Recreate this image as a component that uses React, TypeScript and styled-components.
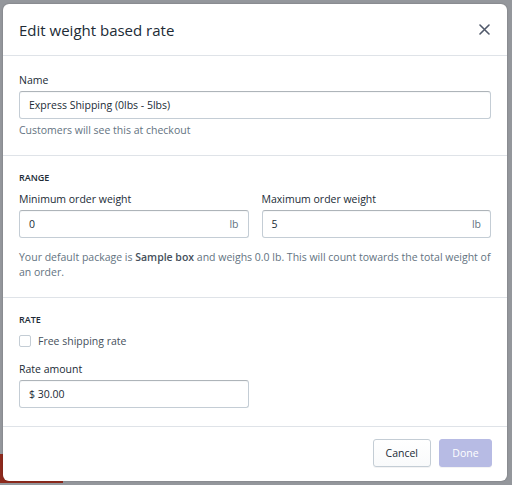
import React from "react";
import styled, {createGlobalStyle} from "styled-components";

const GlobalStyle = createGlobalStyle`
    html, body {
        margin: 0;
        padding: 0;
        background: #94979c;
    }

    * {
        box-sizing: border-box;
    }
`

function CloseIcon() {
    return <svg width="11" height="11" viewBox="0 0 11 11">
        <path d="M1 1 L10 10 M10 1 L1 10" stroke="#50596a" strokeWidth="1.6" strokeLinecap="round"/>
    </svg>
}

interface FieldProps {
    label: string
    value: string
    suffix?: string
}

function TextField({label, value, suffix}: FieldProps) {
    return <Field>
        <Label>{label}</Label>
        <InputBox>
            <span>{value}</span>
            {suffix && <Suffix>{suffix}</Suffix>}
        </InputBox>
    </Field>
}

function App() {
    return <Backdrop>
        <GlobalStyle/>
        <PageBehind/>
        <Modal>
            <Header>
                <Title>Edit weight based rate</Title>
                <CloseButton aria-label="Close"><CloseIcon/></CloseButton>
            </Header>

            <Section $top={17}>
                <TextField label="Name" value="Express Shipping (0lbs - 5lbs)"/>
                <HelpText>Customers will see this at checkout</HelpText>
            </Section>

            <Section>
                <Subheading>Range</Subheading>
                <Row>
                    <TextField label="Minimum order weight" value="0" suffix="lb"/>
                    <TextField label="Maximum order weight" value="5" suffix="lb"/>
                </Row>
                <Note>
                    Your default package is <strong>Sample box</strong> and weighs 0.0 lb. This will count
                    towards the total weight of an order.
                </Note>
            </Section>

            <Section $bottom={18}>
                <Subheading>Rate</Subheading>
                <CheckRow>
                    <CheckBox/>
                    Free shipping rate
                </CheckRow>
                <HalfRow>
                    <TextField label="Rate amount" value="$ 30.00"/>
                </HalfRow>
            </Section>

            <Footer>
                <Button>Cancel</Button>
                <Button $primary>Done</Button>
            </Footer>
        </Modal>
    </Backdrop>
}

const Backdrop = styled.div`
    position: relative;
    width: 512px;
    height: 485px;
    padding: 4px 5px 4px 3px;
    background: #94979c;
    font-family: "Open Sans", "Noto Sans", sans-serif;
    color: #212b36;
    overflow: hidden;
`

const PageBehind = styled.div`
    position: absolute;
    left: 0;
    bottom: 2px;
    width: 63px;
    height: 29px;
    background: #8e2a1d;
`

const Modal = styled.div`
    position: relative;
    display: flex;
    flex-direction: column;
    height: 477px;
    background: #fff;
    border-radius: 6px;
    box-shadow: 0 0 2px rgba(0, 0, 0, 0.25);
`

const Header = styled.div`
    display: flex;
    align-items: center;
    justify-content: space-between;
    height: 52px;
    padding: 0 17px 0 16px;
    border-bottom: 1px solid #dfe3e8;
`

const Title = styled.h2`
    margin: 0;
    font-size: 15px;
    font-weight: 400;
    color: #212b36;
`

const CloseButton = styled.button`
    display: flex;
    padding: 0;
    border: 0;
    background: none;
`

const Section = styled.div<{ $top?: number, $bottom?: number }>`
    padding: ${p => p.$top ?? 15}px 16px ${p => p.$bottom ?? 17}px;
    border-bottom: 1px solid #dfe3e8;
`

const Subheading = styled.h3`
    margin: 0 0 7px;
    font-size: 9px;
    font-weight: 600;
    line-height: 14px;
    text-transform: uppercase;
    color: #212b36;
`

const Field = styled.div`
    flex: 1;
    display: flex;
    flex-direction: column;
`

const Label = styled.label`
    font-size: 10.5px;
    line-height: 14px;
    margin-bottom: 4px;
    color: #212b36;
`

const InputBox = styled.div`
    display: flex;
    align-items: center;
    justify-content: space-between;
    height: 28px;
    padding: 0 9px;
    font-size: 10.5px;
    border: 1px solid #c4cdd5;
    border-top-color: #aeb4b9;
    border-radius: 3px;
    box-shadow: inset 0 1px 0 rgba(99, 115, 129, 0.05);
    color: #212b36;
`

const Suffix = styled.span`
    color: #637381;
`

const HelpText = styled.div`
    margin-top: 4px;
    font-size: 10.5px;
    line-height: 15px;
    color: #637381;
`

const Row = styled.div`
    display: flex;
    gap: 13px;
`

const HalfRow = styled.div`
    display: flex;
    width: 230px;
`

const Note = styled.p`
    margin: 12px 0 0;
    font-size: 10.5px;
    line-height: 15px;
    color: #637381;

    strong {
        font-weight: 600;
        color: #454f5b;
    }
`

const CheckRow = styled.label`
    display: flex;
    align-items: center;
    gap: 7px;
    margin: 0 0 14px;
    font-size: 10.5px;
    line-height: 14px;
    color: #454f5b;
`

const CheckBox = styled.span`
    width: 12px;
    height: 12px;
    border: 1px solid #c4cdd5;
    border-radius: 2px;
    background: #fff;
`

const Footer = styled.div`
    flex: 1;
    display: flex;
    justify-content: flex-end;
    align-items: center;
    gap: 8px;
    padding: 0 15px 2px 16px;
`

const Button = styled.button<{ $primary?: boolean }>`
    height: 28px;
    padding: 0 12px;
    font-family: inherit;
    font-size: 10.5px;
    border-radius: 3px;
    border: 1px solid ${p => p.$primary ? '#b7bbe4' : '#c4cdd5'};
    background: ${p => p.$primary ? '#b7bbe4' : 'linear-gradient(#fff, #f9fafb)'};
    color: ${p => p.$primary ? '#fff' : '#212b36'};
    min-width: ${p => p.$primary ? '53px' : '57px'};
    box-shadow: 0 1px 0 rgba(22, 29, 37, 0.05);
`

export default App;
